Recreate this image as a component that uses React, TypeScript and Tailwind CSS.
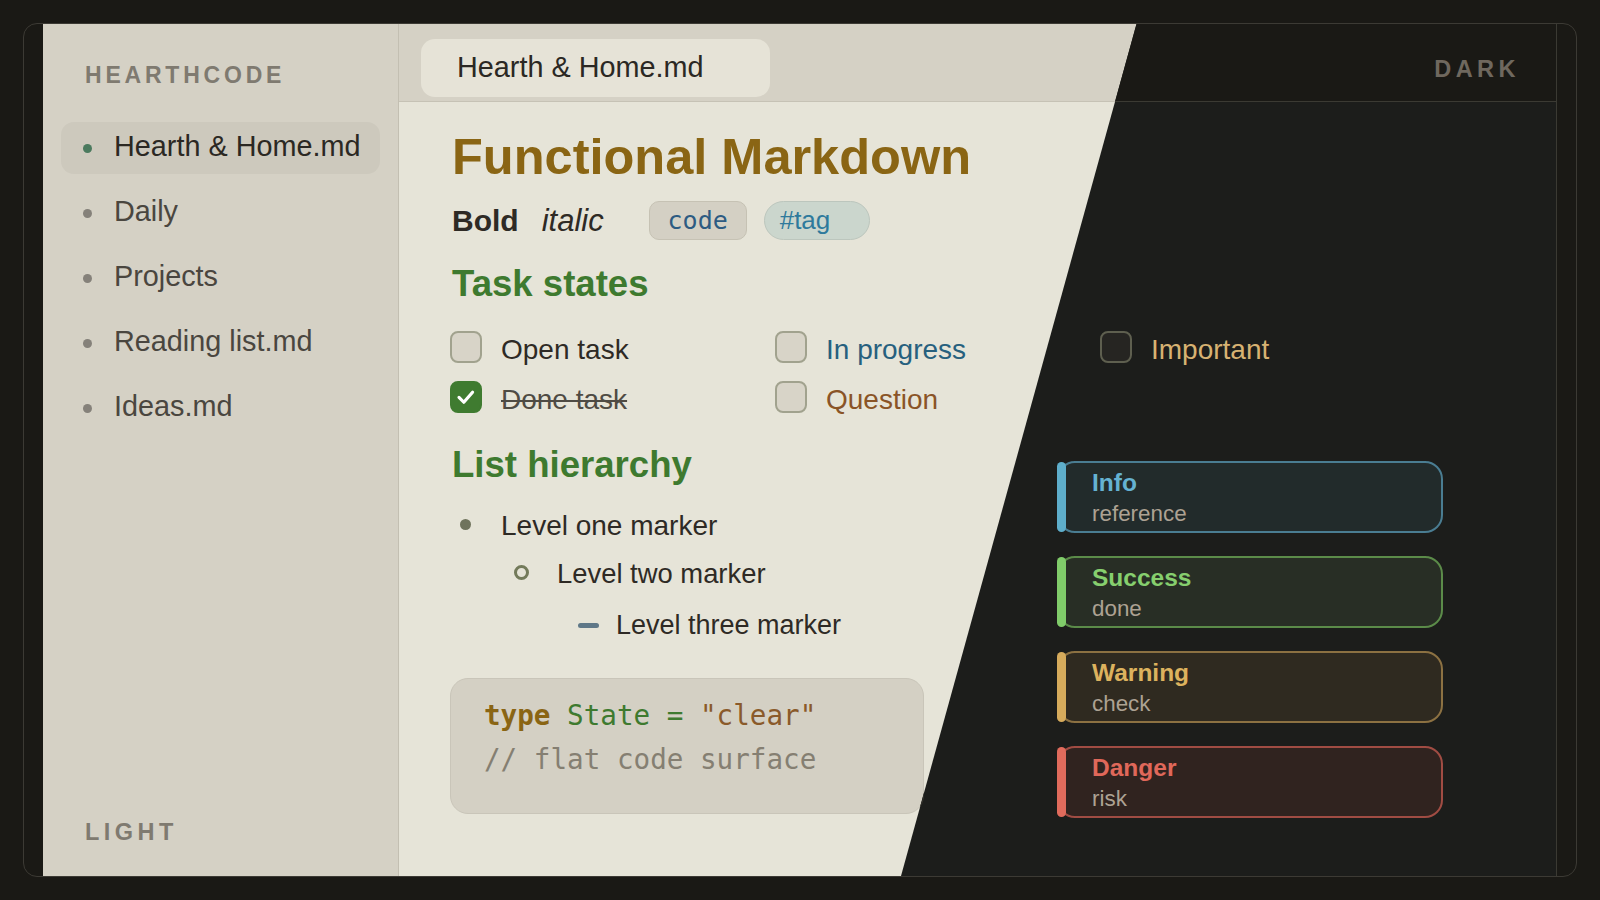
const themes = {
  light: {
    window: 'bg-[#e6e4d8]',
    sidebar: 'border-[#c3bfb2] bg-[#d5d1c5]',
    label: 'text-[#7f7a70]',
    activeItem: 'bg-[#cdc9bd]',
    activeText: 'text-[#2b2823]',
    itemText: 'text-[#4a463f]',
    activeDot: 'bg-[#4b7a5e]',
    dot: 'bg-[#85817a]',
    header: 'border-[#c6c2b5] bg-[#d5d1c5]',
    tab: 'bg-[#e6e3d7] text-[#2b2823]',
    title: 'text-[#8a6514]',
    body: 'text-[#2e2a25]',
    codePill: 'border-[#c6c2b4] bg-[#d4d0c4] text-[#2d5b82]',
    tagPill: 'border-[#bcc6bd] bg-[#cbd6cd] text-[#2e7a9c]',
    heading: 'text-[#3e7a2f]',
    box: 'border-[#a1a28e] bg-[#d8d4c8]',
    boxChecked: 'border-[#3f7b30] bg-[#3f7b30]',
    done: 'text-[#4f4b44]',
    progress: 'text-[#27607e]',
    question: 'text-[#8a5427]',
    important: 'text-[#a0782e]',
    l1: 'bg-[#6f735c]',
    l2: 'border-[#737a5a]',
    l3: 'bg-[#5f7888]',
    code: 'border-[#c9c5b9] bg-[#d4d0c4]',
    kw: 'text-[#8a6514]',
    ident: 'text-[#3e7a2f]',
    str: 'text-[#8a5a2a]',
    comment: 'text-[#857f72]',
  },
  dark: {
    window: 'border-r border-[#3b3a33] bg-[#1c1d1b]',
    sidebar: 'border-[#3b3a33] bg-[#1a1915]',
    label: 'text-[#6f685e]',
    activeItem: 'bg-[#262521]',
    activeText: 'text-[#e6e1d4]',
    itemText: 'text-[#b8b0a2]',
    activeDot: 'bg-[#6fae88]',
    dot: 'bg-[#6f685e]',
    header: 'border-[#3b3a33] bg-[#1a1915]',
    tab: 'bg-[#262521] text-[#e6e1d4]',
    title: 'text-[#d7b272]',
    body: 'text-[#e0dacc]',
    codePill: 'border-[#3b3a33] bg-[#2a2925] text-[#7fb4d8]',
    tagPill: 'border-[#355058] bg-[#223236] text-[#6ab4d4]',
    heading: 'text-[#86cf6e]',
    box: 'border-[#5e5f4f] bg-[#262522]',
    boxChecked: 'border-[#5c9a48] bg-[#5c9a48]',
    done: 'text-[#8a8478]',
    progress: 'text-[#6ab0d0]',
    question: 'text-[#c8955a]',
    important: 'text-[#d7b272]',
    l1: 'bg-[#8a8e74]',
    l2: 'border-[#8a8e74]',
    l3: 'bg-[#7f98a8]',
    code: 'border-[#33322c] bg-[#252522]',
    kw: 'text-[#d7b272]',
    ident: 'text-[#86cf6e]',
    str: 'text-[#c8955a]',
    comment: 'text-[#8a8478]',
  },
};

type Theme = typeof themes.light;

const files = ['Hearth & Home.md', 'Daily', 'Projects', 'Reading list.md', 'Ideas.md'];

const callouts = [
  { title: 'Info', text: 'reference', box: 'border-[#4a7d92] bg-[#222b2b]', bar: 'bg-[#5eaecb]', color: 'text-[#65b2d2]' },
  { title: 'Success', text: 'done', box: 'border-[#5b8b49] bg-[#282e25]', bar: 'bg-[#80cc6a]', color: 'text-[#86cf6e]' },
  { title: 'Warning', text: 'check', box: 'border-[#8c7142] bg-[#2f2a20]', bar: 'bg-[#d6ab5c]', color: 'text-[#dcb25e]' },
  { title: 'Danger', text: 'risk', box: 'border-[#a04c43] bg-[#30231f]', bar: 'bg-[#e06b5c]', color: 'text-[#e0685a]' },
];

function Checkbox({ t, checked }: { t: Theme; checked?: boolean }) {
  return (
    <span className={`flex h-[32px] w-[32px] shrink-0 items-center justify-center rounded-[8px] border-2 ${checked ? t.boxChecked : t.box}`}>
      {checked && (
        <svg width="32" height="32" viewBox="0 0 32 32" fill="none">
          <path d="M8 16.5 L13.5 22 L23.5 10.5" stroke="#ffffff" strokeWidth="3.6" strokeLinecap="round" strokeLinejoin="round" />
        </svg>
      )}
    </span>
  );
}

function Task({ t, label, color, checked, strike }: { t: Theme; label: string; color: string; checked?: boolean; strike?: boolean }) {
  return (
    <div className="flex h-[32px] items-center">
      <Checkbox t={t} checked={checked} />
      <span className={`ml-[19px] pt-[6px] text-[28px] leading-[26px] ${color} ${strike ? 'line-through decoration-[2px]' : ''}`}>{label}</span>
    </div>
  );
}

function Workspace({ dark }: { dark: boolean }) {
  const t = dark ? themes.dark : themes.light;

  return (
    <div className={`flex h-full w-full ${t.window}`}>
      {/* Sidebar */}
      <aside className={`flex w-[356px] shrink-0 flex-col border-r px-[18px] pt-[39px] pb-[32px] ${t.sidebar}`}>
        <div className={`ml-[24px] text-[23px] leading-[24px] font-bold tracking-[0.165em] ${t.label}`}>HEARTHCODE</div>
        <nav className="mt-[35px] flex flex-col gap-[13px]">
          {files.map((name, i) => (
            <div key={name} className={`flex h-[52px] items-center rounded-[13px] pl-[22px] ${i === 0 ? t.activeItem : ''}`}>
              <span className={`h-[9px] w-[9px] rounded-full ${i === 0 ? t.activeDot : t.dot}`} />
              <span className={`ml-[22px] pb-[4px] text-[28.8px] leading-[32px] ${i === 0 ? t.activeText : t.itemText}`}>{name}</span>
            </div>
          ))}
        </nav>
        {!dark && <div className={`mt-auto ml-[24px] text-[23.5px] leading-[24px] font-bold tracking-[0.19em] ${t.label}`}>LIGHT</div>}
      </aside>

      <main className="flex min-w-0 flex-1 flex-col">
        {/* Tab bar */}
        <header className={`flex h-[78px] shrink-0 items-end justify-between border-b pr-[36px] pb-[4px] pl-[22px] ${t.header}`}>
          <div className={`flex h-[58px] w-[349px] items-center rounded-[14px] pl-[36px] text-[28.8px] ${t.tab}`}>Hearth &amp; Home.md</div>
          {dark && <div className={`mb-[16px] text-[23.5px] leading-[24px] font-bold tracking-[0.19em] ${t.label}`}>DARK</div>}
        </header>

        {/* Document */}
        <section className="flex flex-col pt-[30px] pl-[51px]">
          <h1 className={`ml-[2px] text-[50.5px] leading-[50px] font-bold ${t.title}`}>Functional Markdown</h1>

          <div className={`mt-[19px] ml-[2px] flex h-[39px] items-center ${t.body}`}>
            <span className="text-[30px] font-bold">Bold</span>
            <span className="ml-[23px] pt-[2px] text-[31px] italic">italic</span>
            <span className={`ml-[45px] flex h-[39px] w-[98px] items-center justify-center rounded-[10px] border font-['DejaVu_Sans_Mono',monospace] text-[25px] ${t.codePill}`}>code</span>
            <span className={`ml-[17px] flex h-[39px] w-[106px] items-center rounded-full border pl-[15px] text-[26px] ${t.tagPill}`}>#tag</span>
          </div>

          <h2 className={`mt-[22px] ml-[2px] text-[36.6px] leading-[44px] font-bold ${t.heading}`}>Task states</h2>

          <div className="mt-[25px] grid grid-cols-[325px_325px_325px] gap-y-[18px]">
            <Task t={t} label="Open task" color={t.body} />
            <Task t={t} label="In progress" color={t.progress} />
            <Task t={t} label="Important" color={t.important} />
            <Task t={t} label="Done task" color={t.done} checked strike />
            <Task t={t} label="Question" color={t.question} />
          </div>

          <div className="mt-[30px] flex items-start">
            <div className="flex w-[474px] shrink-0 flex-col">
              <h2 className={`ml-[2px] text-[36.6px] leading-[44px] font-bold ${t.heading}`}>List hierarchy</h2>

              <ul className={`mt-[15px] flex flex-col ${t.body}`}>
                <li className="flex h-[48px] items-center">
                  <span className={`mb-[4px] ml-[10px] h-[11px] w-[11px] rounded-full ${t.l1}`} />
                  <span className="ml-[30px] text-[28px]">Level one marker</span>
                </li>
                <li className="flex h-[48px] items-center">
                  <span className={`mb-[3px] ml-[64px] h-[15px] w-[15px] rounded-full border-[3px] ${t.l2}`} />
                  <span className="ml-[28px] text-[27.4px]">Level two marker</span>
                </li>
                <li className="flex h-[54px] items-center">
                  <span className={`ml-[128px] h-[5px] w-[21px] rounded-full ${t.l3}`} />
                  <span className="ml-[17px] text-[27px]">Level three marker</span>
                </li>
              </ul>

              <pre className={`mt-[26px] h-[136px] rounded-[18px] border pt-[15px] pl-[33px] font-['DejaVu_Sans_Mono',monospace] text-[27.6px] leading-[44px] ${t.code}`}>
                <div>
                  <span className={`font-bold ${t.kw}`}>type</span> <span className={t.ident}>State =</span> <span className={t.str}>"clear"</span>
                </div>
                <div className={t.comment}>// flat code surface</div>
              </pre>
            </div>

            <div className="mt-[18px] ml-[133px] flex w-[386px] shrink-0 flex-col gap-[23px]">
              {callouts.map(c => (
                <div key={c.title} className={`relative h-[72px] rounded-[18px] border-2 pt-[6px] pl-[33px] ${c.box}`}>
                  <span className={`absolute -top-[1px] -bottom-[1px] -left-[2px] w-[9px] rounded-full ${c.bar}`} />
                  <div className={`text-[24.5px] leading-[28px] font-bold ${c.color}`}>{c.title}</div>
                  <div className="mt-[3px] text-[22.4px] leading-[28px] text-[#ada293]">{c.text}</div>
                </div>
              ))}
            </div>
          </div>
        </section>
      </main>
    </div>
  );
}

export default function App() {
  return (
    <div className="h-screen w-full bg-[#1a1915] p-[23px] font-['Liberation_Sans',Arial,sans-serif]">
      <div className="h-full rounded-[14px] border border-[#3c3a34] px-[19px]">
        <div className="relative h-full overflow-hidden">
          <Workspace dark={false} />
          {/* dark theme layer, cut along the diagonal */}
          <div className="absolute inset-0 [clip-path:polygon(1093.5px_0,100%_0,100%_100%,858px_100%)]">
            <Workspace dark />
          </div>
        </div>
      </div>
    </div>
  );
}
